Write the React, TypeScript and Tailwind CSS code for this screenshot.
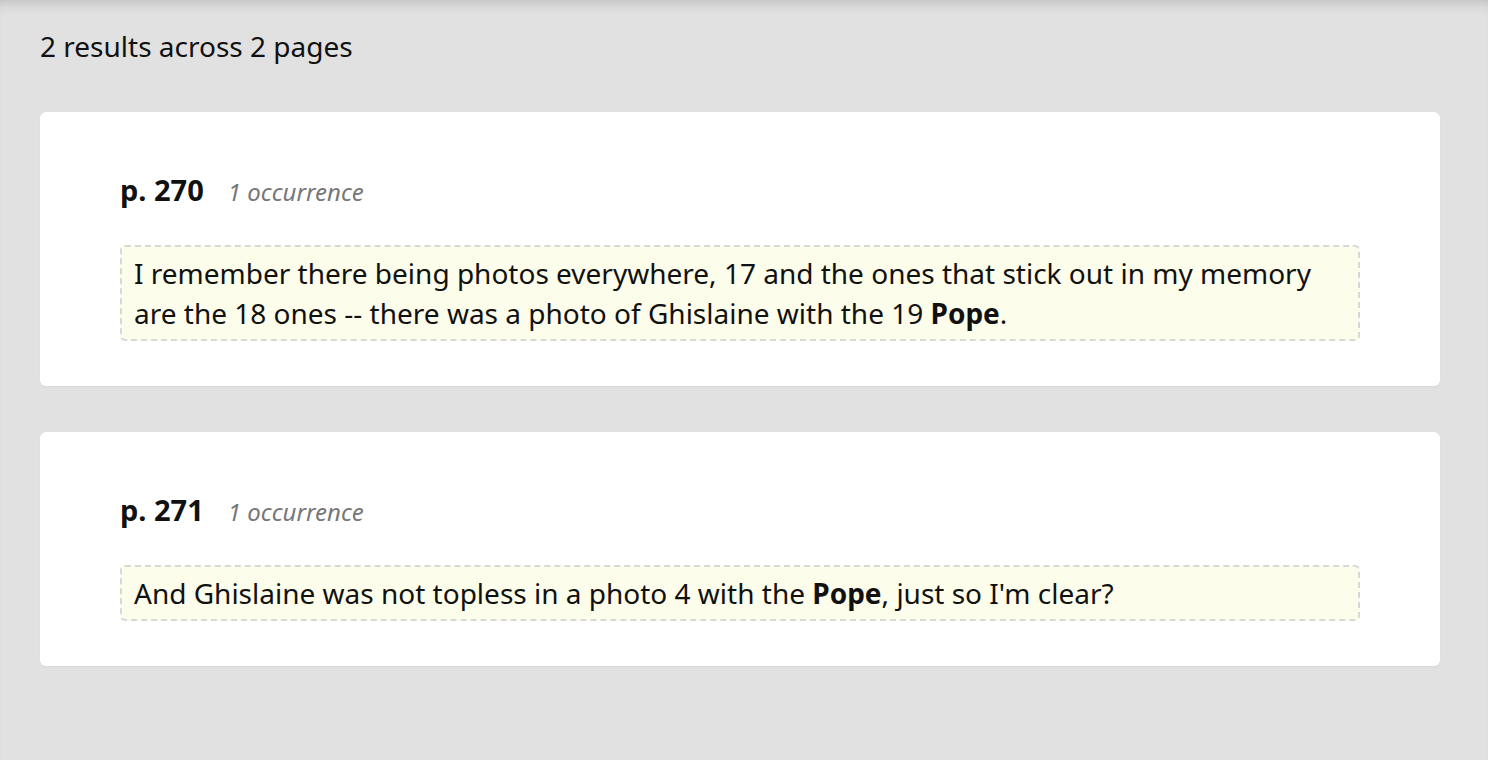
type Result = {
  page: number;
  count: number;
  parts: { text: string; hit?: boolean }[];
};

const RESULTS: Result[] = [
  {
    page: 270,
    count: 1,
    parts: [
      { text: 'I remember there being photos everywhere, 17 and the ones that stick out in my memory are the 18 ones -- there was a photo of Ghislaine with the 19 ' },
      { text: 'Pope', hit: true },
      { text: '.' },
    ],
  },
  {
    page: 271,
    count: 1,
    parts: [
      { text: 'And Ghislaine was not topless in a photo 4 with the ' },
      { text: 'Pope', hit: true },
      { text: ", just so I'm clear?" },
    ],
  },
];

function ResultCard({ r }: { r: Result }) {
  return (
    <div className="bg-white rounded-[6px] px-[80px] pt-[57px] pb-[45px] shadow-[0_1px_2px_rgba(0,0,0,0.04)]">
      <div className="flex items-baseline gap-[24px] h-[42px] leading-[42px] overflow-hidden">
        <span className="text-[29px] font-bold text-[#111]">p. {r.page}</span>
        <span className="text-[24px] italic text-[#777]">
          {r.count} occurrence{r.count === 1 ? '' : 's'}
        </span>
      </div>
      <div className="mt-[34px] bg-[#fdfdeb] border-2 border-dashed border-[#d8d8d8] rounded-[5px] px-[12px] py-[6px] text-[28px] leading-[40px] text-[#111]">
        {r.parts.map((p, i) =>
          p.hit ? (
            <strong key={i} className="font-bold">{p.text}</strong>
          ) : (
            <span key={i}>{p.text}</span>
          )
        )}
      </div>
    </div>
  );
}

export default function App() {
  return (
    <div
      className="min-h-screen bg-[#e1e1e1] pl-[40px] pr-[48px] pt-[25px] pb-[40px] shadow-[inset_0_12px_14px_-10px_rgba(0,0,0,0.18)]"
      style={{ fontFamily: '"Noto Sans", "Open Sans", sans-serif' }}
    >
      <div className="text-[28px] leading-[42px] text-[#111]">2 results across 2 pages</div>
      <div className="mt-[45px] flex flex-col gap-[46px]">
        {RESULTS.map((r) => (
          <ResultCard key={r.page} r={r} />
        ))}
      </div>
    </div>
  );
}
